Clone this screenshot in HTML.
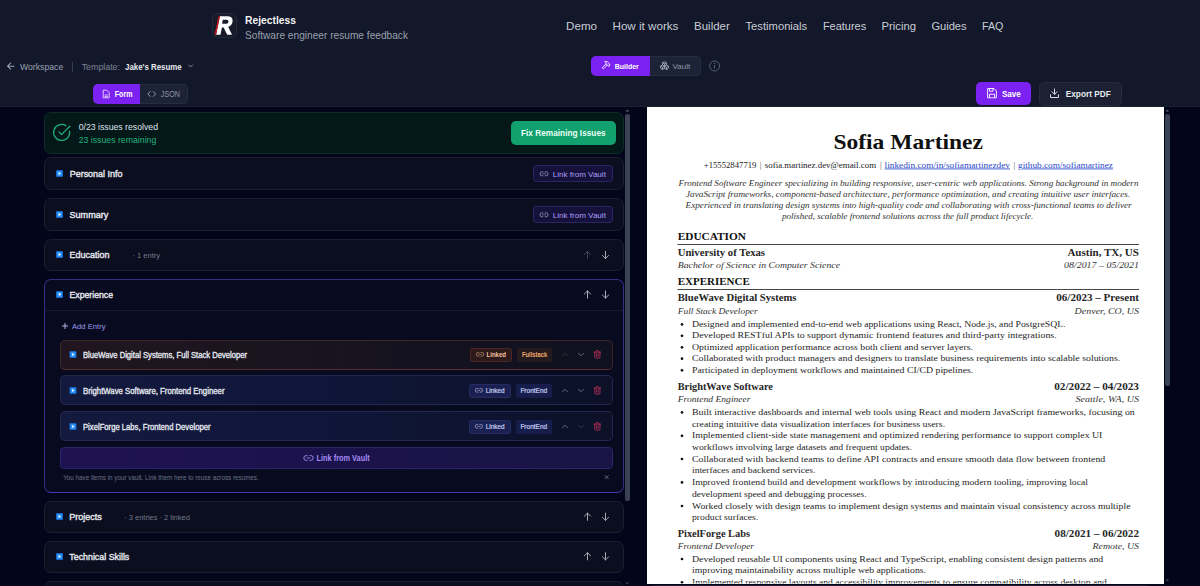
<!DOCTYPE html>
<html><head><meta charset="utf-8"><title>Rejectless Builder</title><style>
*{margin:0;padding:0;box-sizing:border-box}
html,body{width:1200px;height:586px;overflow:hidden;background:#03051a}
body{position:relative;font-family:"Liberation Sans",sans-serif}
div{position:absolute}
.hdr{left:0;top:0;width:1200px;height:107px;background:#121729;border-bottom:1px solid #1c2233}
.logo{left:212px;top:13px;width:25px;height:25px;border-radius:6px;background:#171b29;border:1px solid #262b3a}
.seg1{left:93px;top:84px;width:95px;height:19.5px;border-radius:5px;background:#1d2336;box-shadow:inset 0 0 0 1px #262d40;overflow:hidden}
.seg1 .on{left:0;top:0;width:47px;height:19.5px;background:#7b22f2}
.seg2{left:591px;top:56.2px;width:109.5px;height:19.5px;border-radius:5px;background:#1d2336;box-shadow:inset 0 0 0 1px #262d40;overflow:hidden}
.seg2 .on{left:0;top:0;width:59px;height:19.5px;background:#7b22f2}
.btn-save{left:976px;top:82px;width:55px;height:23px;border-radius:5px;background:#7b22f2}
.btn-export{left:1038.5px;top:81.5px;width:83.5px;height:24px;border-radius:5px;background:#1b2133;border:1px solid #262c3d}
.lscroll{left:625px;top:108px;width:5px;height:478px}
.lscroll .thumb{left:0px;top:6px;width:4.5px;height:387px;border-radius:2px;background:#3a4254}
.card{left:44px;width:580px;border-radius:7px}
.green{top:112px;height:41.5px;background:#041719;border:1px solid #0d2b27}
.btn-fix{left:510.5px;top:121px;width:105.5px;height:23.5px;border-radius:5px;background:#11a06e}
.sec{background:#0b0e1f;border:1px solid #1a1e30}
.lfv{left:533px;width:80px;height:17px;border-radius:3px;background:#15113a;border:1px solid #2a2462}
.exp{top:278.5px;height:214.5px;background:#080b1f;border:1px solid #332e86;border-bottom-color:#4038b0}
.exp-div{left:45px;top:310px;width:578px;height:1px;background:#161a33}
.entry{left:60px;width:553px;height:30px;border-radius:5px}
.e1{top:339.5px;background:linear-gradient(90deg,#21161f 0%,#19141f 40%,#0f1020 100%);border:1px solid #3b2620;border-bottom-color:#5a2c2c}
.e2{background:linear-gradient(90deg,#131a3d 0%,#10163a 45%,#0c1128 100%);border:1px solid #20284e}
.badge{height:13.5px;border-radius:2.5px}
.b-or{background:#2e1a1a;border:1px solid #4a2724}
.b-or2{background:#251a1d}
.b-bl{background:#1a2152;border:1px solid #242c62}
.b-bl2{background:#181e4b}
.vaultbar{left:60px;top:447px;width:553px;height:21.5px;border-radius:4px;background:linear-gradient(90deg,#1f1252 0%,#1b134b 50%,#191445 100%);border:1px solid #2a2468}
.paper{left:646.5px;top:107px;width:517.5px;height:476.5px;background:#fff}
.rscroll{left:1165px;top:107px;width:5px;height:479px}
.rscroll .thumb{left:0px;top:7px;width:4.5px;height:272px;border-radius:2px;background:#3a4356}
svg{position:absolute;left:0;top:0}
</style></head>
<body>

<div class="hdr"></div>
<div class="logo"></div>
<div class="seg1"><div class="on"></div></div>
<div class="seg2"><div class="on"></div></div>
<div class="btn-save"></div>
<div class="btn-export"></div>

<div class="lscroll"><div class="thumb"></div></div>
<div class="card green"></div>
<div class="btn-fix"></div>
<div class="card sec" style="top:157px;height:33px"></div>
<div class="lfv" style="top:165px"></div>
<div class="card sec" style="top:198px;height:32.5px"></div>
<div class="lfv" style="top:206px"></div>
<div class="card sec" style="top:239px;height:31.5px"></div>
<div class="card exp"></div>
<div class="exp-div"></div>
<div class="entry e1"></div>
<div class="badge b-or" style="left:470px;top:348px;width:42px"></div>
<div class="badge b-or2" style="left:517px;top:348px;width:35px"></div>
<div class="entry e2" style="top:375px"></div>
<div class="badge b-bl" style="left:469px;top:384px;width:42px"></div>
<div class="badge b-bl2" style="left:516px;top:384px;width:36px"></div>
<div class="entry e2" style="top:411px"></div>
<div class="badge b-bl" style="left:469px;top:420px;width:42px"></div>
<div class="badge b-bl2" style="left:516px;top:420px;width:36px"></div>
<div class="vaultbar"></div>
<div class="card sec" style="top:501px;height:31.5px"></div>
<div class="card sec" style="top:540.5px;height:32px"></div>
<div class="card sec" style="top:580.5px;height:32px"></div>

<div class="paper"></div>
<div class="rscroll"><div class="thumb"></div></div>
<div style="left:653px;top:584.5px;width:496px;height:2px;background:#1a1e2c"></div>

<svg width="1200" height="586" style="left:0;top:0"><defs><clipPath id="pc"><rect x="646.5" y="107" width="517.5" height="476.5"/></clipPath></defs>
<g><path d="M219.9,16.2 L227.2,16.2 Q233,16.2 232.6,21.3 Q232.2,25.6 228.2,26.8 L232,34.8 L227.2,34.8 L223.6,27.4 L221.9,27.4 L220.5,34.8 L216.1,34.8 Z M222.8,19.8 L222.1,23.8 L226.4,23.8 Q228.3,23.8 228.5,21.8 Q228.7,19.8 226.6,19.8 Z" fill="#ffffff" fill-rule="evenodd"/>
<path d="M218.4,16.2 L219.9,16.2 L216.1,34.8 L214.6,34.8 Z" fill="#c8141c"/></g>

<rect x="56" y="170" width="7" height="7" rx="0.8" fill="#1763c4"/><rect x="56.9" y="170.9" width="5.2" height="5.2" rx="0.4" fill="#2a93f5"/><path d="M58.6,171.9 L61.0,173.5 L58.6,175.1 Z" fill="#fff"/><rect x="56" y="211" width="7" height="7" rx="0.8" fill="#1763c4"/><rect x="56.9" y="211.9" width="5.2" height="5.2" rx="0.4" fill="#2a93f5"/><path d="M58.6,212.9 L61.0,214.5 L58.6,216.1 Z" fill="#fff"/><rect x="56" y="251" width="7" height="7" rx="0.8" fill="#1763c4"/><rect x="56.9" y="251.9" width="5.2" height="5.2" rx="0.4" fill="#2a93f5"/><path d="M58.6,252.9 L61.0,254.5 L58.6,256.1 Z" fill="#fff"/><rect x="56" y="291" width="7" height="7" rx="0.8" fill="#1763c4"/><rect x="56.9" y="291.9" width="5.2" height="5.2" rx="0.4" fill="#2a93f5"/><path d="M58.2,293.6 L61.2,293.6 L59.7,296.0 Z" fill="#fff"/><rect x="56" y="513" width="7" height="7" rx="0.8" fill="#1763c4"/><rect x="56.9" y="513.9" width="5.2" height="5.2" rx="0.4" fill="#2a93f5"/><path d="M58.6,514.9 L61.0,516.5 L58.6,518.1 Z" fill="#fff"/><rect x="56" y="553" width="7" height="7" rx="0.8" fill="#1763c4"/><rect x="56.9" y="553.9" width="5.2" height="5.2" rx="0.4" fill="#2a93f5"/><path d="M58.6,554.9 L61.0,556.5 L58.6,558.1 Z" fill="#fff"/><rect x="69.5" y="351" width="7" height="7" rx="0.8" fill="#1763c4"/><rect x="70.4" y="351.9" width="5.2" height="5.2" rx="0.4" fill="#2a93f5"/><path d="M72.1,352.9 L74.5,354.5 L72.1,356.1 Z" fill="#fff"/><rect x="69.5" y="387" width="7" height="7" rx="0.8" fill="#1763c4"/><rect x="70.4" y="387.9" width="5.2" height="5.2" rx="0.4" fill="#2a93f5"/><path d="M72.1,388.9 L74.5,390.5 L72.1,392.1 Z" fill="#fff"/><rect x="69.5" y="423" width="7" height="7" rx="0.8" fill="#1763c4"/><rect x="70.4" y="423.9" width="5.2" height="5.2" rx="0.4" fill="#2a93f5"/><path d="M72.1,424.9 L74.5,426.5 L72.1,428.1 Z" fill="#fff"/><path d="M587.5,258.6 V251.4 M584.4,254.5 L587.5,251.4 L590.6,254.5" stroke="#3f4556" stroke-width="1" fill="none" stroke-linecap="round" stroke-linejoin="round"/><path d="M605.5,251.4 V258.6 M602.4,255.5 L605.5,258.6 L608.6,255.5" stroke="#a4aab8" stroke-width="1" fill="none" stroke-linecap="round" stroke-linejoin="round"/><path d="M587.5,298.1 V290.9 M584.4,294.0 L587.5,290.9 L590.6,294.0" stroke="#aab0be" stroke-width="1" fill="none" stroke-linecap="round" stroke-linejoin="round"/><path d="M605.5,290.9 V298.1 M602.4,295.0 L605.5,298.1 L608.6,295.0" stroke="#aab0be" stroke-width="1" fill="none" stroke-linecap="round" stroke-linejoin="round"/><path d="M587.5,520.3000000000001 V513.1 M584.4,516.2 L587.5,513.1 L590.6,516.2" stroke="#a4aab8" stroke-width="1" fill="none" stroke-linecap="round" stroke-linejoin="round"/><path d="M605.5,513.1 V520.3000000000001 M602.4,517.2 L605.5,520.3000000000001 L608.6,517.2" stroke="#a4aab8" stroke-width="1" fill="none" stroke-linecap="round" stroke-linejoin="round"/><path d="M587.5,559.9 V552.6999999999999 M584.4,555.8 L587.5,552.6999999999999 L590.6,555.8" stroke="#a4aab8" stroke-width="1" fill="none" stroke-linecap="round" stroke-linejoin="round"/><path d="M605.5,552.6999999999999 V559.9 M602.4,556.8 L605.5,559.9 L608.6,556.8" stroke="#a4aab8" stroke-width="1" fill="none" stroke-linecap="round" stroke-linejoin="round"/><path d="M562.4,355.8 L565,353.2 L567.6,355.8" stroke="#3a3440" stroke-width="0.95" fill="none" stroke-linecap="round" stroke-linejoin="round"/><path d="M578.4,353.2 L581,355.8 L583.6,353.2" stroke="#6c6878" stroke-width="0.95" fill="none" stroke-linecap="round" stroke-linejoin="round"/><g transform="translate(592.9,349.9) scale(0.37)" stroke="#a82d52" stroke-width="2.6" fill="none" stroke-linecap="round" stroke-linejoin="round"><path d="M3 6h18"/><path d="M19 6v14c0 1-1 2-2 2H7c-1 0-2-1-2-2V6"/><path d="M8 6V4c0-1 1-2 2-2h4c1 0 2 1 2 2v2"/><path d="M10 11v6M14 11v6"/></g><path d="M562.4,391.8 L565,389.2 L567.6,391.8" stroke="#666c86" stroke-width="0.95" fill="none" stroke-linecap="round" stroke-linejoin="round"/><path d="M578.4,389.2 L581,391.8 L583.6,389.2" stroke="#666c86" stroke-width="0.95" fill="none" stroke-linecap="round" stroke-linejoin="round"/><g transform="translate(592.9,385.9) scale(0.37)" stroke="#a82d52" stroke-width="2.6" fill="none" stroke-linecap="round" stroke-linejoin="round"><path d="M3 6h18"/><path d="M19 6v14c0 1-1 2-2 2H7c-1 0-2-1-2-2V6"/><path d="M8 6V4c0-1 1-2 2-2h4c1 0 2 1 2 2v2"/><path d="M10 11v6M14 11v6"/></g><path d="M562.4,427.8 L565,425.2 L567.6,427.8" stroke="#666c86" stroke-width="0.95" fill="none" stroke-linecap="round" stroke-linejoin="round"/><path d="M578.4,425.2 L581,427.8 L583.6,425.2" stroke="#343a55" stroke-width="0.95" fill="none" stroke-linecap="round" stroke-linejoin="round"/><g transform="translate(592.9,421.9) scale(0.37)" stroke="#a82d52" stroke-width="2.6" fill="none" stroke-linecap="round" stroke-linejoin="round"><path d="M3 6h18"/><path d="M19 6v14c0 1-1 2-2 2H7c-1 0-2-1-2-2V6"/><path d="M8 6V4c0-1 1-2 2-2h4c1 0 2 1 2 2v2"/><path d="M10 11v6M14 11v6"/></g><g transform="translate(540.2,173.8) scale(0.85)" stroke="#a49fc4" stroke-width="0.9" fill="none" stroke-linecap="round"><path d="M3.2,-2.4 H2.2 A2.4,2.4 0 0 0 2.2,2.4 H3.2"/><path d="M5.8,-2.4 H6.8 A2.4,2.4 0 0 1 6.8,2.4 H5.8"/><path d="M3,0 H6"/></g><g transform="translate(540.2,214.8) scale(0.85)" stroke="#a49fc4" stroke-width="0.9" fill="none" stroke-linecap="round"><path d="M3.2,-2.4 H2.2 A2.4,2.4 0 0 0 2.2,2.4 H3.2"/><path d="M5.8,-2.4 H6.8 A2.4,2.4 0 0 1 6.8,2.4 H5.8"/><path d="M3,0 H6"/></g><g transform="translate(476.5,354.3) scale(0.78)" stroke="#c99a7c" stroke-width="0.9" fill="none" stroke-linecap="round"><path d="M3.2,-2.4 H2.2 A2.4,2.4 0 0 0 2.2,2.4 H3.2"/><path d="M5.8,-2.4 H6.8 A2.4,2.4 0 0 1 6.8,2.4 H5.8"/><path d="M3,0 H6"/></g><g transform="translate(475.5,390.3) scale(0.78)" stroke="#aab2d4" stroke-width="0.9" fill="none" stroke-linecap="round"><path d="M3.2,-2.4 H2.2 A2.4,2.4 0 0 0 2.2,2.4 H3.2"/><path d="M5.8,-2.4 H6.8 A2.4,2.4 0 0 1 6.8,2.4 H5.8"/><path d="M3,0 H6"/></g><g transform="translate(475.5,426.3) scale(0.78)" stroke="#aab2d4" stroke-width="0.9" fill="none" stroke-linecap="round"><path d="M3.2,-2.4 H2.2 A2.4,2.4 0 0 0 2.2,2.4 H3.2"/><path d="M5.8,-2.4 H6.8 A2.4,2.4 0 0 1 6.8,2.4 H5.8"/><path d="M3,0 H6"/></g><g transform="translate(304,458) scale(1.0)" stroke="#a98cf7" stroke-width="0.9" fill="none" stroke-linecap="round"><path d="M3.2,-2.4 H2.2 A2.4,2.4 0 0 0 2.2,2.4 H3.2"/><path d="M5.8,-2.4 H6.8 A2.4,2.4 0 0 1 6.8,2.4 H5.8"/><path d="M3,0 H6"/></g><path d="M625.4,111.6 L627.3,109.4 L629.2,111.6 Z" fill="#5a6272"/><path d="M625.4,582.4 L627.3,584.6 L629.2,582.4 Z" fill="#3d4453"/><path d="M1165.4,111.6 L1167.3,109.4 L1169.2,111.6 Z" fill="#5a6272"/><path d="M1165.4,579.4 L1167.3,581.6 L1169.2,579.4 Z" fill="#3d4453"/><path d="M65,323 V329 M62,326 H68" stroke="#b4b0e6" stroke-width="1" /><path d="M604.8,475.3 L608.6,479.1 M608.6,475.3 L604.8,479.1" stroke="#6b7283" stroke-width="0.9"/><path d="M69.6,131.4 A8,8 0 1 1 65.8,125.6" stroke="#20ae7a" stroke-width="1.3" fill="none" stroke-linecap="round"/><path d="M58.9,131.9 L61.5,134.6 L69.8,126.3" stroke="#20ae7a" stroke-width="1.3" fill="none" stroke-linecap="round" stroke-linejoin="round"/><path d="M14,66.2 H7.6 M10.6,63.2 L7.6,66.2 L10.6,69.2" stroke="#9aa3b2" stroke-width="1.1" fill="none" stroke-linecap="round" stroke-linejoin="round"/><rect x="72" y="62" width="0.9" height="10" fill="#3a4152"/><path d="M188.6,65 L190.6,67 L192.6,65" stroke="#8c94a3" stroke-width="0.9" fill="none" stroke-linecap="round" stroke-linejoin="round"/><g stroke="#f1e8ff" stroke-width="0.85" fill="none" stroke-linejoin="round"><path d="M103.2,90.2 H106.8 L109.2,92.6 V97.8 H103.2 Z"/><path d="M104.6,95 H107.8 M104.6,96.6 H107.8"/></g><g stroke="#9aa3b2" stroke-width="0.9" fill="none" stroke-linecap="round" stroke-linejoin="round"><path d="M150.3,91.5 L147.8,94 L150.3,96.5"/><path d="M153.2,91.5 L155.7,94 L153.2,96.5"/></g><g transform="translate(601.2,60.3) scale(0.4)" stroke="#f3e9ff" stroke-width="2.4" fill="none" stroke-linecap="round" stroke-linejoin="round"><path d="m15 12-8.373 8.373a1 1 0 1 1-3-3L12 9"/><path d="m18 15 4-4"/><path d="m21.5 11.5-1.914-1.914A2 2 0 0 1 19 8.172V7l-2.26-2.26a6 6 0 0 0-4.202-1.756L9 2.96l.92.82A6.18 6.18 0 0 1 12 8.4V10l2 2h1.172a2 2 0 0 1 1.414.586L18.5 14.5"/></g><g transform="translate(659.7,60.8) scale(0.4)" stroke="#9aa3b2" stroke-width="2.3" fill="none" stroke-linecap="round" stroke-linejoin="round"><path d="M2.97 12.92A2 2 0 0 0 2 14.63v3.24a2 2 0 0 0 .97 1.71l3 1.8a2 2 0 0 0 2.06 0L12 19v-5.5l-5-3-4.03 2.42Z"/><path d="m7 16.5-4.74-2.85"/><path d="m7 16.5 5-3"/><path d="M7 16.5v5.17"/><path d="M12 13.5V19l3.97 2.38a2 2 0 0 0 2.06 0l3-1.8a2 2 0 0 0 .97-1.71v-3.24a2 2 0 0 0-.97-1.71L17 10.5l-5 3Z"/><path d="m17 16.5-5-3"/><path d="m17 16.5 4.74-2.85"/><path d="M17 16.5v5.17"/><path d="M7.97 4.42A2 2 0 0 0 7 6.13v4.37l5 3 5-3V6.13a2 2 0 0 0-.97-1.71l-3-1.8a2 2 0 0 0-2.06 0l-3 1.8Z"/><path d="M12 8 7.26 5.15"/><path d="m12 8 4.74-2.85"/><path d="M12 13.5V8"/></g><circle cx="714.6" cy="66" r="5" stroke="#5d6576" stroke-width="0.9" fill="none"/><path d="M714.6,65 V68.6" stroke="#5d6576" stroke-width="1"/><circle cx="714.6" cy="63.4" r="0.6" fill="#5d6576"/><g stroke="#f5edff" stroke-width="1" fill="none" stroke-linejoin="round"><path d="M987.6,88.5 H994 L996.4,90.9 V97.8 H987.6 Z"/><path d="M989.5,88.5 V91.2 H993 V88.5"/><path d="M989.5,97.8 V94.2 H994.5 V97.8"/></g><g stroke="#d8dce4" stroke-width="1" fill="none" stroke-linecap="round" stroke-linejoin="round"><path d="M1054.5,89 V94.2 M1052,91.8 L1054.5,94.3 L1057,91.8"/><path d="M1050.5,94.8 V97.5 H1058.5 V94.8"/></g>
<text x="566.1" y="30.2" font-size="11.6" font-weight="400" font-style="normal" fill="#c9cdd6" font-family='"Liberation Sans", sans-serif' textLength="31.0" lengthAdjust="spacingAndGlyphs" >Demo</text><text x="612.5" y="30.2" font-size="11.6" font-weight="400" font-style="normal" fill="#c9cdd6" font-family='"Liberation Sans", sans-serif' textLength="65.9" lengthAdjust="spacingAndGlyphs" >How it works</text><text x="694.1" y="30.2" font-size="11.6" font-weight="400" font-style="normal" fill="#c9cdd6" font-family='"Liberation Sans", sans-serif' textLength="35.7" lengthAdjust="spacingAndGlyphs" >Builder</text><text x="745.5" y="30.2" font-size="11.6" font-weight="400" font-style="normal" fill="#c9cdd6" font-family='"Liberation Sans", sans-serif' textLength="61.7" lengthAdjust="spacingAndGlyphs" >Testimonials</text><text x="822.9" y="30.2" font-size="11.6" font-weight="400" font-style="normal" fill="#c9cdd6" font-family='"Liberation Sans", sans-serif' textLength="43.3" lengthAdjust="spacingAndGlyphs" >Features</text><text x="881.5" y="30.2" font-size="11.6" font-weight="400" font-style="normal" fill="#c9cdd6" font-family='"Liberation Sans", sans-serif' textLength="34.5" lengthAdjust="spacingAndGlyphs" >Pricing</text><text x="931.4" y="30.2" font-size="11.6" font-weight="400" font-style="normal" fill="#c9cdd6" font-family='"Liberation Sans", sans-serif' textLength="35.2" lengthAdjust="spacingAndGlyphs" >Guides</text><text x="982" y="30.2" font-size="11.6" font-weight="400" font-style="normal" fill="#c9cdd6" font-family='"Liberation Sans", sans-serif' textLength="21.4" lengthAdjust="spacingAndGlyphs" >FAQ</text><text x="245" y="23.9" font-size="11.6" font-weight="700" font-style="normal" fill="#f3f4f6" font-family='"Liberation Sans", sans-serif' textLength="51.0" lengthAdjust="spacingAndGlyphs" >Rejectless</text><text x="245" y="38.9" font-size="10.2" font-weight="400" font-style="normal" fill="#9aa1ae" font-family='"Liberation Sans", sans-serif' textLength="163.0" lengthAdjust="spacingAndGlyphs" >Software engineer resume feedback</text><text x="20" y="69.5" font-size="8.8" font-weight="400" font-style="normal" fill="#9aa3b2" font-family='"Liberation Sans", sans-serif' textLength="43.3" lengthAdjust="spacingAndGlyphs" >Workspace</text><text x="81.7" y="69.5" font-size="8.8" font-weight="400" font-style="normal" fill="#7d8596" font-family='"Liberation Sans", sans-serif' textLength="38.3" lengthAdjust="spacingAndGlyphs" >Template:</text><text x="125" y="69.5" font-size="8.8" font-weight="700" font-style="normal" fill="#e8eaef" font-family='"Liberation Sans", sans-serif' textLength="56.7" lengthAdjust="spacingAndGlyphs" >Jake&#x27;s Resume</text><text x="114.7" y="97" font-size="8.2" font-weight="700" font-style="normal" fill="#ffffff" font-family='"Liberation Sans", sans-serif' textLength="17.8" lengthAdjust="spacingAndGlyphs" >Form</text><text x="160.8" y="97" font-size="8.2" font-weight="400" font-style="normal" fill="#8e96a6" font-family='"Liberation Sans", sans-serif' textLength="19.2" lengthAdjust="spacingAndGlyphs" >JSON</text><text x="614.75" y="69.2" font-size="8.0" font-weight="700" font-style="normal" fill="#ffffff" font-family='"Liberation Sans", sans-serif' textLength="24.0" lengthAdjust="spacingAndGlyphs" >Builder</text><text x="672.5" y="69.2" font-size="8.0" font-weight="400" font-style="normal" fill="#8e96a6" font-family='"Liberation Sans", sans-serif' textLength="17.8" lengthAdjust="spacingAndGlyphs" >Vault</text><text x="1002" y="96.8" font-size="8.4" font-weight="700" font-style="normal" fill="#ffffff" font-family='"Liberation Sans", sans-serif' textLength="18.8" lengthAdjust="spacingAndGlyphs" >Save</text><text x="1065.75" y="96.8" font-size="8.4" font-weight="700" font-style="normal" fill="#e8eaef" font-family='"Liberation Sans", sans-serif' textLength="45.0" lengthAdjust="spacingAndGlyphs" >Export PDF</text><text x="78.7" y="129.6" font-size="8.8" font-weight="400" font-style="normal" fill="#dfe3ea" font-family='"Liberation Sans", sans-serif' textLength="79.3" lengthAdjust="spacingAndGlyphs" >0/23 issues resolved</text><text x="78.7" y="142.7" font-size="8.8" font-weight="400" font-style="normal" fill="#22b37c" font-family='"Liberation Sans", sans-serif' textLength="77.6" lengthAdjust="spacingAndGlyphs" >23 issues remaining</text><text x="521" y="136.1" font-size="8.4" font-weight="700" font-style="normal" fill="#eafff5" font-family='"Liberation Sans", sans-serif' textLength="84.6" lengthAdjust="spacingAndGlyphs" >Fix Remaining Issues</text><text x="69.7" y="177" font-size="9.6" font-weight="400" font-style="normal" fill="#e6e8ee" font-family='"Liberation Sans", sans-serif' textLength="52.8" lengthAdjust="spacingAndGlyphs"  stroke="#e6e8ee" stroke-width="0.4">Personal Info</text><text x="552.7" y="177" font-size="8.0" font-weight="400" font-style="normal" fill="#ad9ef6" font-family='"Liberation Sans", sans-serif' textLength="53.2" lengthAdjust="spacingAndGlyphs" >Link from Vault</text><text x="69.5" y="218" font-size="9.6" font-weight="400" font-style="normal" fill="#e6e8ee" font-family='"Liberation Sans", sans-serif' textLength="38.9" lengthAdjust="spacingAndGlyphs"  stroke="#e6e8ee" stroke-width="0.4">Summary</text><text x="552.7" y="218" font-size="8.0" font-weight="400" font-style="normal" fill="#ad9ef6" font-family='"Liberation Sans", sans-serif' textLength="53.2" lengthAdjust="spacingAndGlyphs" >Link from Vault</text><text x="69.5" y="257.9" font-size="9.6" font-weight="400" font-style="normal" fill="#e6e8ee" font-family='"Liberation Sans", sans-serif' textLength="39.9" lengthAdjust="spacingAndGlyphs"  stroke="#e6e8ee" stroke-width="0.4">Education</text><text x="132.5" y="257.9" font-size="7.6" font-weight="400" font-style="normal" fill="#737a8b" font-family='"Liberation Sans", sans-serif' textLength="27.6" lengthAdjust="spacingAndGlyphs" >· 1 entry</text><text x="69.5" y="298" font-size="9.6" font-weight="400" font-style="normal" fill="#e6e8ee" font-family='"Liberation Sans", sans-serif' textLength="43.5" lengthAdjust="spacingAndGlyphs"  stroke="#e6e8ee" stroke-width="0.4">Experience</text><text x="72" y="329" font-size="7.8" font-weight="400" font-style="normal" fill="#9e97ec" font-family='"Liberation Sans", sans-serif' textLength="33.5" lengthAdjust="spacingAndGlyphs" >Add Entry</text><text x="83" y="357.5" font-size="8.4" font-weight="400" font-style="normal" fill="#e3e6ee" font-family='"Liberation Sans", sans-serif' textLength="164.0" lengthAdjust="spacingAndGlyphs"  stroke="#e3e6ee" stroke-width="0.35">BlueWave Digital Systems, Full Stack Developer</text><text x="486.6" y="356.8" font-size="7.4" font-weight="700" font-style="normal" fill="#f7c4a0" font-family='"Liberation Sans", sans-serif' textLength="19.4" lengthAdjust="spacingAndGlyphs" >Linked</text><text x="521.9" y="356.8" font-size="7.4" font-weight="700" font-style="normal" fill="#eeaa6c" font-family='"Liberation Sans", sans-serif' textLength="25.3" lengthAdjust="spacingAndGlyphs" >Fullstack</text><text x="83" y="393.75" font-size="8.4" font-weight="400" font-style="normal" fill="#e3e6ee" font-family='"Liberation Sans", sans-serif' textLength="141.5" lengthAdjust="spacingAndGlyphs"  stroke="#e3e6ee" stroke-width="0.35">BrightWave Software, Frontend Engineer</text><text x="485.7" y="392.8" font-size="7.4" font-weight="400" font-style="normal" fill="#ccd3f4" font-family='"Liberation Sans", sans-serif' textLength="18.8" lengthAdjust="spacingAndGlyphs"  stroke="#ccd3f4" stroke-width="0.2">Linked</text><text x="520.4" y="392.8" font-size="7.4" font-weight="400" font-style="normal" fill="#c8d0f6" font-family='"Liberation Sans", sans-serif' textLength="26.8" lengthAdjust="spacingAndGlyphs"  stroke="#c8d0f6" stroke-width="0.2">FrontEnd</text><text x="83" y="429.5" font-size="8.4" font-weight="400" font-style="normal" fill="#e3e6ee" font-family='"Liberation Sans", sans-serif' textLength="127.5" lengthAdjust="spacingAndGlyphs"  stroke="#e3e6ee" stroke-width="0.35">PixelForge Labs, Frontend Developer</text><text x="485.7" y="429" font-size="7.4" font-weight="400" font-style="normal" fill="#ccd3f4" font-family='"Liberation Sans", sans-serif' textLength="18.8" lengthAdjust="spacingAndGlyphs"  stroke="#ccd3f4" stroke-width="0.2">Linked</text><text x="520.4" y="429" font-size="7.4" font-weight="400" font-style="normal" fill="#c8d0f6" font-family='"Liberation Sans", sans-serif' textLength="26.8" lengthAdjust="spacingAndGlyphs"  stroke="#c8d0f6" stroke-width="0.2">FrontEnd</text><text x="316.5" y="461.2" font-size="8.2" font-weight="700" font-style="normal" fill="#a98cf7" font-family='"Liberation Sans", sans-serif' textLength="53.2" lengthAdjust="spacingAndGlyphs" >Link from Vault</text><text x="63.25" y="479.9" font-size="6.6" font-weight="400" font-style="normal" fill="#697083" font-family='"Liberation Sans", sans-serif' textLength="195.5" lengthAdjust="spacingAndGlyphs" >You have items in your vault. Link them here to reuse across resumes.</text><text x="69.3" y="519.7" font-size="9.6" font-weight="400" font-style="normal" fill="#e6e8ee" font-family='"Liberation Sans", sans-serif' textLength="32.5" lengthAdjust="spacingAndGlyphs"  stroke="#e6e8ee" stroke-width="0.4">Projects</text><text x="124.3" y="519.7" font-size="7.6" font-weight="400" font-style="normal" fill="#737a8b" font-family='"Liberation Sans", sans-serif' textLength="65.5" lengthAdjust="spacingAndGlyphs" >· 3 entries · 2 linked</text><text x="69.3" y="559.6" font-size="9.6" font-weight="400" font-style="normal" fill="#e6e8ee" font-family='"Liberation Sans", sans-serif' textLength="60.0" lengthAdjust="spacingAndGlyphs"  stroke="#e6e8ee" stroke-width="0.4">Technical Skills</text>
<g clip-path="url(#pc)" font-family='"Liberation Serif", serif'>
<text x="833.4" y="149.4" font-size="21.5" font-weight="700" font-style="normal" fill="#111" textLength="149.6" lengthAdjust="spacingAndGlyphs" >Sofia Martinez</text><text x="703.75" y="167.5" font-size="8.6" font-weight="400" font-style="normal" fill="#222" textLength="52.7" lengthAdjust="spacingAndGlyphs" >+15552847719</text><text x="759.8" y="167.5" font-size="8.6" font-weight="400" font-style="normal" fill="#555" >|</text><text x="764.8" y="167.5" font-size="8.6" font-weight="400" font-style="normal" fill="#222" textLength="111.3" lengthAdjust="spacingAndGlyphs" >sofia.martinez.dev@email.com</text><text x="879.9" y="167.5" font-size="8.6" font-weight="400" font-style="normal" fill="#555" >|</text><text x="884.6" y="167.5" font-size="8.6" font-weight="400" font-style="normal" fill="#2b48c8" textLength="125.4" lengthAdjust="spacingAndGlyphs" text-decoration="underline">linkedin.com/in/sofiamartinezdev</text><text x="1013.5" y="167.5" font-size="8.6" font-weight="400" font-style="normal" fill="#555" >|</text><text x="1018" y="167.5" font-size="8.6" font-weight="400" font-style="normal" fill="#2b48c8" textLength="94.9" lengthAdjust="spacingAndGlyphs" text-decoration="underline">github.com/sofiamartinez</text><text x="678.4" y="186.4" font-size="8.6" font-weight="400" font-style="italic" fill="#333" textLength="460.1" lengthAdjust="spacingAndGlyphs" >Frontend Software Engineer specializing in building responsive, user-centric web applications. Strong background in modern</text><text x="686" y="197.2" font-size="8.6" font-weight="400" font-style="italic" fill="#333" textLength="444.2" lengthAdjust="spacingAndGlyphs" >JavaScript frameworks, component-based architecture, performance optimization, and creating intuitive user interfaces.</text><text x="685.6" y="208.1" font-size="8.6" font-weight="400" font-style="italic" fill="#333" textLength="446.1" lengthAdjust="spacingAndGlyphs" >Experienced in translating design systems into high-quality code and collaborating with cross-functional teams to deliver</text><text x="782" y="219.2" font-size="8.6" font-weight="400" font-style="italic" fill="#333" textLength="251.3" lengthAdjust="spacingAndGlyphs" >polished, scalable frontend solutions across the full product lifecycle.</text><text x="677.7" y="239.7" font-size="11" font-weight="700" font-style="normal" fill="#111" textLength="68.3" lengthAdjust="spacingAndGlyphs" >EDUCATION</text><rect x="677.5" y="244.1" width="461.5" height="0.9" fill="#333"/><text x="677.7" y="256" font-size="10" font-weight="700" font-style="normal" fill="#262626" textLength="87.3" lengthAdjust="spacingAndGlyphs" >University of Texas</text><text x="1067.4" y="256" font-size="10" font-weight="700" font-style="normal" fill="#262626" textLength="71.6" lengthAdjust="spacingAndGlyphs" >Austin, TX, US</text><text x="677.7" y="267.8" font-size="8.8" font-weight="400" font-style="italic" fill="#333" textLength="162.3" lengthAdjust="spacingAndGlyphs" >Bachelor of Science in Computer Science</text><text x="1064" y="267.8" font-size="8.8" font-weight="400" font-style="italic" fill="#333" textLength="75.0" lengthAdjust="spacingAndGlyphs" >08/2017 – 05/2021</text><text x="677.7" y="285" font-size="11" font-weight="700" font-style="normal" fill="#111" >EXPERIENCE</text><rect x="677.5" y="289.1" width="461.5" height="0.9" fill="#333"/><text x="677.7" y="301.4" font-size="10" font-weight="700" font-style="normal" fill="#262626" textLength="118.8" lengthAdjust="spacingAndGlyphs" >BlueWave Digital Systems</text><text x="1056.25" y="301.4" font-size="10" font-weight="700" font-style="normal" fill="#262626" textLength="82.8" lengthAdjust="spacingAndGlyphs" >06/2023 – Present</text><text x="677.7" y="314.1" font-size="8.8" font-weight="400" font-style="italic" fill="#333" textLength="80.0" lengthAdjust="spacingAndGlyphs" >Full Stack Developer</text><text x="1074.6" y="314.1" font-size="8.8" font-weight="400" font-style="italic" fill="#333" textLength="64.4" lengthAdjust="spacingAndGlyphs" >Denver, CO, US</text><circle cx="682" cy="324.4" r="1.35" fill="#111"/><text x="692" y="327" font-size="8.5" font-weight="400" font-style="normal" fill="#262626" textLength="373.6" lengthAdjust="spacingAndGlyphs" >Designed and implemented end-to-end web applications using React, Node.js, and PostgreSQL.</text><circle cx="682" cy="335.8" r="1.35" fill="#111"/><text x="692" y="338.4" font-size="8.5" font-weight="400" font-style="normal" fill="#262626" textLength="364.7" lengthAdjust="spacingAndGlyphs" >Developed RESTful APIs to support dynamic frontend features and third-party integrations.</text><circle cx="682" cy="347.3" r="1.35" fill="#111"/><text x="692" y="349.9" font-size="8.5" font-weight="400" font-style="normal" fill="#262626" textLength="280.9" lengthAdjust="spacingAndGlyphs" >Optimized application performance across both client and server layers.</text><circle cx="682" cy="358.7" r="1.35" fill="#111"/><text x="692" y="361.3" font-size="8.5" font-weight="400" font-style="normal" fill="#262626" textLength="428.2" lengthAdjust="spacingAndGlyphs" >Collaborated with product managers and designers to translate business requirements into scalable solutions.</text><circle cx="682" cy="370.3" r="1.35" fill="#111"/><text x="692" y="372.9" font-size="8.5" font-weight="400" font-style="normal" fill="#262626" textLength="281.3" lengthAdjust="spacingAndGlyphs" >Participated in deployment workflows and maintained CI/CD pipelines.</text><text x="677.7" y="389.8" font-size="10" font-weight="700" font-style="normal" fill="#262626" textLength="95.2" lengthAdjust="spacingAndGlyphs" >BrightWave Software</text><text x="1054.2" y="389.8" font-size="10" font-weight="700" font-style="normal" fill="#262626" textLength="84.8" lengthAdjust="spacingAndGlyphs" >02/2022 – 04/2023</text><text x="677.7" y="401.9" font-size="8.8" font-weight="400" font-style="italic" fill="#333" textLength="72.9" lengthAdjust="spacingAndGlyphs" >Frontend Engineer</text><text x="1075.5" y="401.9" font-size="8.8" font-weight="400" font-style="italic" fill="#333" textLength="63.5" lengthAdjust="spacingAndGlyphs" >Seattle, WA, US</text><circle cx="682" cy="412.4" r="1.35" fill="#111"/><text x="692" y="415" font-size="8.5" font-weight="400" font-style="normal" fill="#262626" textLength="442.8" lengthAdjust="spacingAndGlyphs" >Built interactive dashboards and internal web tools using React and modern JavaScript frameworks, focusing on</text><text x="692" y="426.8" font-size="8.5" font-weight="400" font-style="normal" fill="#262626" textLength="253.1" lengthAdjust="spacingAndGlyphs" >creating intuitive data visualization interfaces for business users.</text><circle cx="682" cy="435.8" r="1.35" fill="#111"/><text x="692" y="438.4" font-size="8.5" font-weight="400" font-style="normal" fill="#262626" textLength="410.4" lengthAdjust="spacingAndGlyphs" >Implemented client-side state management and optimized rendering performance to support complex UI</text><text x="692" y="450.4" font-size="8.5" font-weight="400" font-style="normal" fill="#262626" textLength="219.9" lengthAdjust="spacingAndGlyphs" >workflows involving large datasets and frequent updates.</text><circle cx="682" cy="459.0" r="1.35" fill="#111"/><text x="692" y="461.6" font-size="8.5" font-weight="400" font-style="normal" fill="#262626" textLength="413.3" lengthAdjust="spacingAndGlyphs" >Collaborated with backend teams to define API contracts and ensure smooth data flow between frontend</text><text x="692" y="473.4" font-size="8.5" font-weight="400" font-style="normal" fill="#262626" textLength="123.4" lengthAdjust="spacingAndGlyphs" >interfaces and backend services.</text><circle cx="682" cy="482.4" r="1.35" fill="#111"/><text x="692" y="485" font-size="8.5" font-weight="400" font-style="normal" fill="#262626" textLength="396.0" lengthAdjust="spacingAndGlyphs" >Improved frontend build and development workflows by introducing modern tooling, improving local</text><text x="692" y="496.6" font-size="8.5" font-weight="400" font-style="normal" fill="#262626" textLength="174.6" lengthAdjust="spacingAndGlyphs" >development speed and debugging processes.</text><circle cx="682" cy="506.0" r="1.35" fill="#111"/><text x="692" y="508.6" font-size="8.5" font-weight="400" font-style="normal" fill="#262626" textLength="438.5" lengthAdjust="spacingAndGlyphs" >Worked closely with design teams to implement design systems and maintain visual consistency across multiple</text><text x="692" y="520.3" font-size="8.5" font-weight="400" font-style="normal" fill="#262626" textLength="66.3" lengthAdjust="spacingAndGlyphs" >product surfaces.</text><text x="677.7" y="536.6" font-size="10" font-weight="700" font-style="normal" fill="#262626" textLength="72.3" lengthAdjust="spacingAndGlyphs" >PixelForge Labs</text><text x="1054.6" y="536.6" font-size="10" font-weight="700" font-style="normal" fill="#262626" textLength="84.4" lengthAdjust="spacingAndGlyphs" >08/2021 – 06/2022</text><text x="677.7" y="548.7" font-size="8.8" font-weight="400" font-style="italic" fill="#333" textLength="76.3" lengthAdjust="spacingAndGlyphs" >Frontend Developer</text><text x="1092.5" y="548.7" font-size="8.8" font-weight="400" font-style="italic" fill="#333" textLength="46.5" lengthAdjust="spacingAndGlyphs" >Remote, US</text><circle cx="682" cy="559.0" r="1.35" fill="#111"/><text x="692" y="561.6" font-size="8.5" font-weight="400" font-style="normal" fill="#262626" textLength="411.3" lengthAdjust="spacingAndGlyphs" >Developed reusable UI components using React and TypeScript, enabling consistent design patterns and</text><text x="692" y="573.3" font-size="8.5" font-weight="400" font-style="normal" fill="#262626" textLength="234.0" lengthAdjust="spacingAndGlyphs" >improving maintainability across multiple web applications.</text><circle cx="682" cy="582.4" r="1.35" fill="#111"/><text x="692" y="585" font-size="8.5" font-weight="400" font-style="normal" fill="#262626" textLength="414.8" lengthAdjust="spacingAndGlyphs" >Implemented responsive layouts and accessibility improvements to ensure compatibility across desktop and</text>
</g>
</svg>
</body></html>
